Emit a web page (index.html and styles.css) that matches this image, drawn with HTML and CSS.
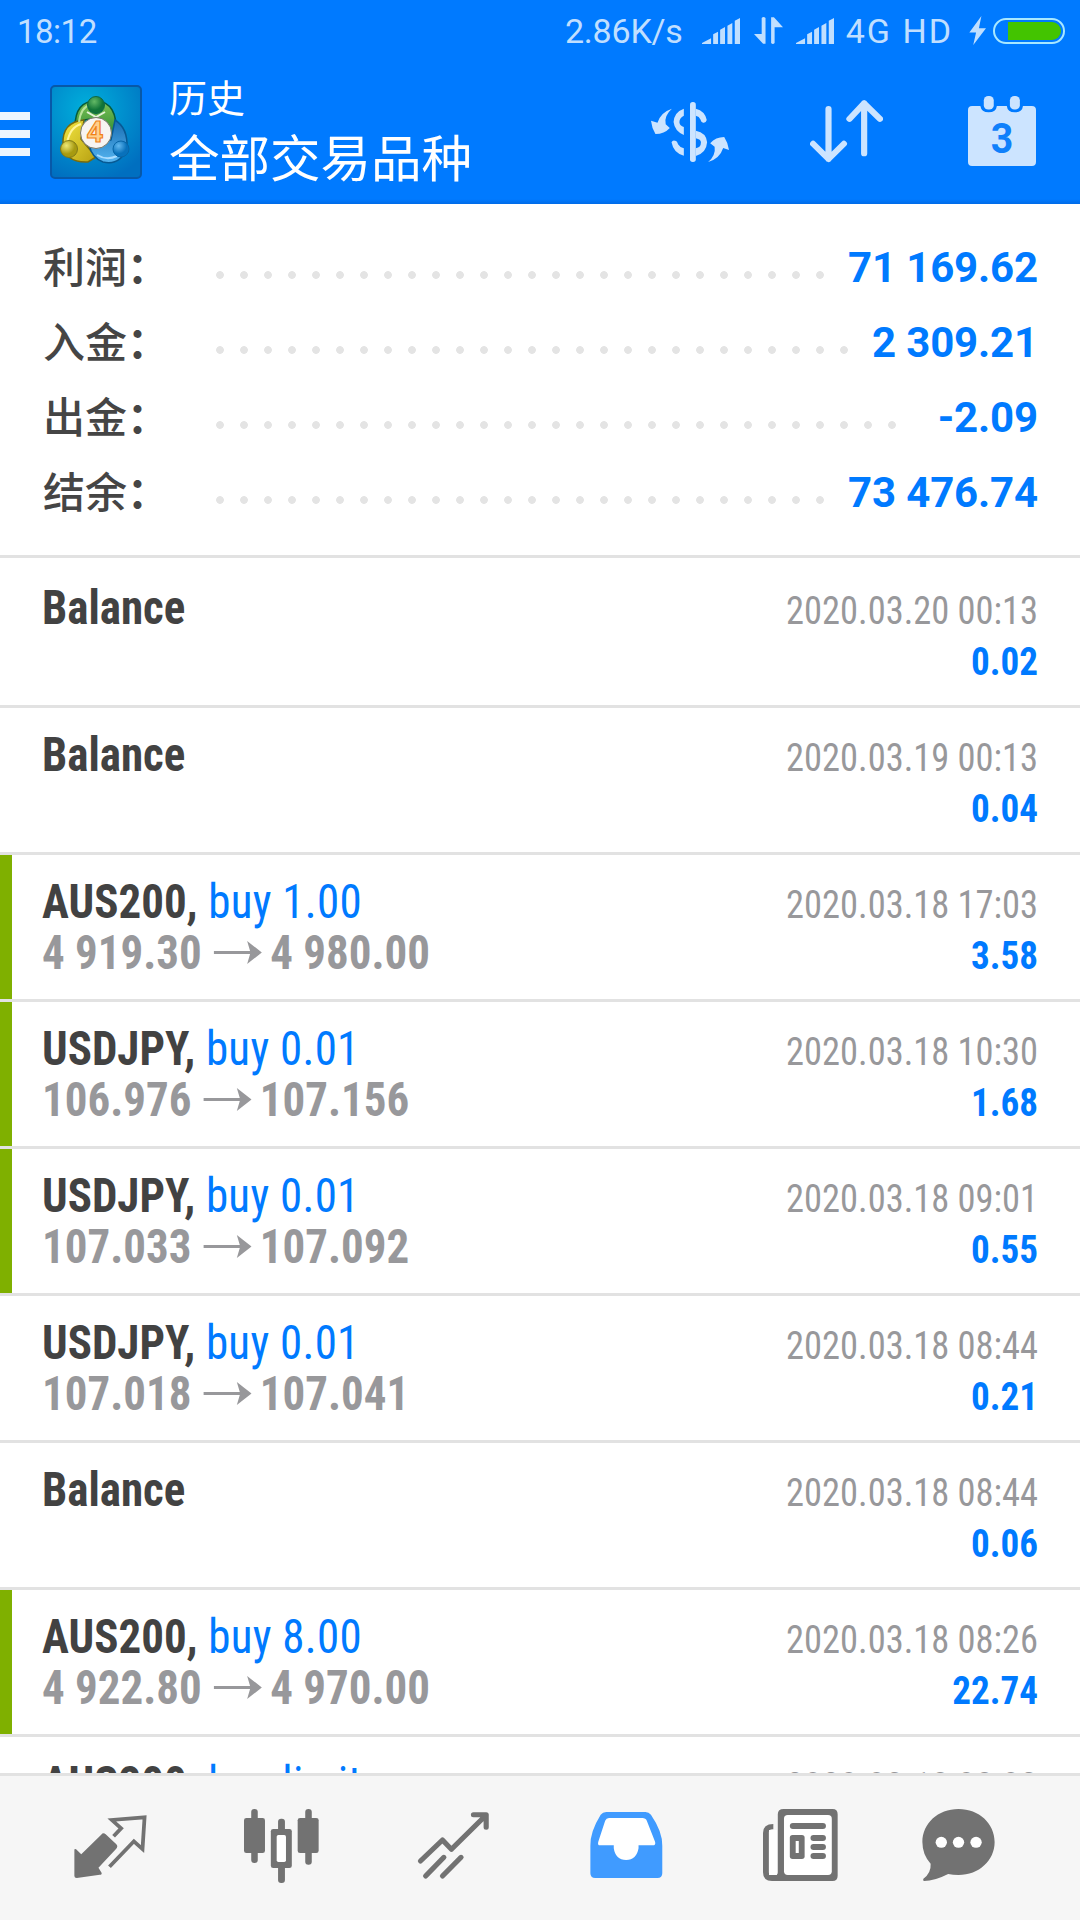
FILE: index.html
```html
<!DOCTYPE html>
<html lang="zh-CN">
<head>
<meta charset="utf-8">
<title>历史</title>
<link rel="stylesheet" href="styles.css">
</head>
<body>
<header class="header">
  <div class="status">
    <span class="clock">18:12</span>
    <div class="status-right">
      <span class="speed">2.86K/s</span>
      <svg class="signal" viewBox="0 0 109 77" preserveAspectRatio="none"><path d="M0 77V74L26 60V77ZM32 48 46 41V77H32ZM52 35 66 27V77H52ZM73 23 87 15V77H73ZM94 8 109 0V77H94Z"/></svg>
      <svg class="transfer" viewBox="0 0 83 80" preserveAspectRatio="none"><path d="M22 3Q27-3 33 3V79H26L0 50H22ZM49 77Q54 83 59 77V30H83L57 1H49Z"/></svg>
      <svg class="signal" viewBox="0 0 109 77" preserveAspectRatio="none"><path d="M0 77V74L26 60V77ZM32 48 46 41V77H32ZM52 35 66 27V77H52ZM73 23 87 15V77H73ZM94 8 109 0V77H94Z"/></svg>
      <span class="network">4G HD</span>
      <svg class="bolt" viewBox="0 0 48 86" preserveAspectRatio="none"><path d="M35 0 1 49H20L12 86 48 36H28Z"/></svg>
      <span class="battery"><span class="charge"></span></span>
    </div>
  </div>
  <div class="appbar">
    <span class="menu"><i></i><i></i><i></i></span>
    <svg class="logo" viewBox="0 0 92 94">
      <defs>
        <radialGradient id="sky" cx=".4" cy=".25" r=".8"><stop offset="0" stop-color="#00b0dc"/><stop offset="1" stop-color="#006fc0"/></radialGradient>
        <linearGradient id="green" x2="0" y2="1"><stop offset="0" stop-color="#7fc354"/><stop offset="1" stop-color="#137a2b"/></linearGradient>
        <linearGradient id="gold" x2="1" y2="1"><stop offset="0" stop-color="#f3e640"/><stop offset="1" stop-color="#b7a012"/></linearGradient>
        <linearGradient id="blue" x2="0" y2="1"><stop offset="0" stop-color="#176bb1"/><stop offset="1" stop-color="#55b5f1"/></linearGradient>
        <radialGradient id="greenball" cx=".4" cy=".3"><stop offset="0" stop-color="#63b965"/><stop offset="1" stop-color="#117437"/></radialGradient>
        <radialGradient id="goldball" cx=".35" cy=".3"><stop offset="0" stop-color="#eee875"/><stop offset="1" stop-color="#a79a10"/></radialGradient>
        <radialGradient id="blueball" cx=".35" cy=".3"><stop offset="0" stop-color="#63b8ef"/><stop offset="1" stop-color="#0871bb"/></radialGradient>
      </defs>
      <rect x="1" y="1" width="90" height="92" rx="4" fill="url(#sky)" stroke="#0758a8" stroke-width="2"/>
      <path d="M25 42Q25 16 46 16Q68 17 66 49L56 60L48 33L34 35Z" fill="url(#green)" stroke="#075c3c" stroke-width="1.5"/>
      <path d="M34 35Q12 37 13 59Q15 78 38 77L46 72L31 54Z" fill="url(#gold)" stroke="#796b0c" stroke-width="1.5"/>
      <path d="M65 35Q78 43 77 63Q70 81 53 77Q42 73 39 60L61 55Z" fill="url(#blue)" stroke="#075993" stroke-width="1.5"/>
      <path d="M17 58Q20 42 31 39" fill="none" stroke="#fff59a" stroke-width="2"/>
      <path d="M29 37Q31 22 40 20" fill="none" stroke="#b8e29a" stroke-width="2"/>
      <path d="M37 27 46 32 55 27" fill="none" stroke="#e4f2d8" stroke-width="2"/>
      <path d="M47 70Q57 76 67 71" fill="none" stroke="#a9dcff" stroke-width="2"/>
      <circle cx="46" cy="20" r="8.5" fill="url(#greenball)" stroke="#0d6847"/>
      <circle cx="19" cy="64" r="8.5" fill="url(#goldball)" stroke="#807a19"/>
      <circle cx="71" cy="64" r="8" fill="url(#blueball)" stroke="#0865a7"/>
      <circle cx="46" cy="48" r="15.5" fill="#f7f4f2" stroke="#77776a"/>
      <text class="logo-digit" x="45" y="57" text-anchor="middle">4</text>
    </svg>
    <div class="titles">
      <div class="title">历史</div>
      <div class="subtitle">全部交易品种</div>
    </div>
    <div class="actions">
      <svg class="act-dollar" viewBox="0 0 228 180" preserveAspectRatio="none">
        <path d="M61 20Q37 42 43 67L55 78Q39 96 13 96Q2 77 0 56L19 62Q28 31 61 20ZM167 180Q190 159 186 134L173 124Q189 105 214 105Q225 122 228 144L211 138Q201 170 167 180Z"/>
        <path d="M96 20V41Q83 47 83 61Q84 72 96 75V99Q69 87 66 60Q68 30 96 20ZM60 121Q63 114 70 116Q77 117 79 127Q84 136 96 139V161Q66 154 60 121Z"/>
        <path d="M131 20Q158 27 163 54Q160 64 152 62Q145 59 145 53Q141 43 131 41ZM131 86Q162 92 164 121Q162 153 131 162V139Q146 137 146 121Q146 112 131 109Z"/>
        <rect x="114" y="0" width="17" height="180" rx="8"/>
      </svg>
      <svg class="act-sort" viewBox="0 0 213 190" preserveAspectRatio="none"><path d="M54 27V178M9 132 54 178 99 132M158 161V10M115 57 158 10 204 57" fill="none" stroke="#cce4ff" stroke-width="18" stroke-linecap="round" stroke-linejoin="round"/></svg>
      <svg class="act-calendar" viewBox="0 0 198 211" preserveAspectRatio="none">
        <path d="M12 30H36Q39 49 60 49Q82 49 84 30H113Q115 49 136 49Q158 49 160 30H186Q198 30 198 42V199Q198 211 186 211H12Q0 211 0 199V42Q0 30 12 30Z"/>
        <rect x="46" y="0" width="29" height="41" rx="13"/><rect x="122" y="0" width="29" height="41" rx="13"/>
        <text class="cal-digit" transform="translate(99 173) scale(.88 1)" text-anchor="middle">3</text>
      </svg>
    </div>
  </div>
</header>

<section class="summary">
  <div class="sum-row"><span class="sum-label">利润<b>：</b></span><span class="dots" style="width:624px"></span><span class="sum-value">71 169.62</span></div>
  <div class="sum-row"><span class="sum-label">入金<b>：</b></span><span class="dots" style="width:648px"></span><span class="sum-value">2 309.21</span></div>
  <div class="sum-row"><span class="sum-label">出金<b>：</b></span><span class="dots" style="width:696px"></span><span class="sum-value">-2.09</span></div>
  <div class="sum-row"><span class="sum-label">结余<b>：</b></span><span class="dots" style="width:624px"></span><span class="sum-value">73 476.74</span></div>
</section>

<main class="deals">
  <article class="deal"><div class="info"><div class="name"><b>Balance</b></div></div><div class="result"><div class="date">2020.03.20 00:13</div><div class="profit">0.02</div></div></article>
  <article class="deal"><div class="info"><div class="name"><b>Balance</b></div></div><div class="result"><div class="date">2020.03.19 00:13</div><div class="profit">0.04</div></div></article>
  <article class="deal closed"><div class="info"><div class="name"><b>AUS200,</b> buy 1.00</div><div class="prices">4 919.30<svg class="arrow" viewBox="0 0 49 22"><path d="M0 9.5H37L34 0 49 11 34 22 37 12.500H0Z"/></svg>4 980.00</div></div><div class="result"><div class="date">2020.03.18 17:03</div><div class="profit">3.58</div></div></article>
  <article class="deal closed"><div class="info"><div class="name"><b>USDJPY,</b> buy 0.01</div><div class="prices">106.976<svg class="arrow" viewBox="0 0 49 22"><path d="M0 9.5H37L34 0 49 11 34 22 37 12.500H0Z"/></svg>107.156</div></div><div class="result"><div class="date">2020.03.18 10:30</div><div class="profit">1.68</div></div></article>
  <article class="deal closed"><div class="info"><div class="name"><b>USDJPY,</b> buy 0.01</div><div class="prices">107.033<svg class="arrow" viewBox="0 0 49 22"><path d="M0 9.5H37L34 0 49 11 34 22 37 12.500H0Z"/></svg>107.092</div></div><div class="result"><div class="date">2020.03.18 09:01</div><div class="profit">0.55</div></div></article>
  <article class="deal"><div class="info"><div class="name"><b>USDJPY,</b> buy 0.01</div><div class="prices">107.018<svg class="arrow" viewBox="0 0 49 22"><path d="M0 9.5H37L34 0 49 11 34 22 37 12.500H0Z"/></svg>107.041</div></div><div class="result"><div class="date">2020.03.18 08:44</div><div class="profit">0.21</div></div></article>
  <article class="deal"><div class="info"><div class="name"><b>Balance</b></div></div><div class="result"><div class="date">2020.03.18 08:44</div><div class="profit">0.06</div></div></article>
  <article class="deal closed"><div class="info"><div class="name"><b>AUS200,</b> buy 8.00</div><div class="prices">4 922.80<svg class="arrow" viewBox="0 0 49 22"><path d="M0 9.5H37L34 0 49 11 34 22 37 12.500H0Z"/></svg>4 970.00</div></div><div class="result"><div class="date">2020.03.18 08:26</div><div class="profit">22.74</div></div></article>
  <article class="deal"><div class="info"><div class="name"><b>AUS200,</b> buy limit</div></div><div class="result"><div class="date">2020.03.18 08:03</div></div></article>
</main>

<nav class="tabs">
  <svg class="tab" viewBox="0 0 218 222" preserveAspectRatio="none">
    <path d="M4 123Q4 118 9 121L24 136 82 77Q88 69 95 76L126 106Q132 113 125 120L74 176 83 191Q85 197 78 197L11 207Q4 207 4 201Z"/>
    <path d="M118 82 140 58 113 33 208 25 202 120 177 97 106 173" fill="none" stroke="#727272" stroke-width="11"/>
  </svg>
  <svg class="tab" viewBox="0 0 218 222" preserveAspectRatio="none">
    <rect x="21" y="0" width="19" height="162" rx="9"/><rect x="0" y="27" width="61" height="105" rx="7"/>
    <rect x="178" y="0" width="19" height="167" rx="9"/><rect x="156" y="27" width="61" height="105" rx="7"/>
    <rect x="99" y="29" width="20" height="193" rx="9"/><rect x="78" y="60" width="61" height="117" rx="7"/><rect x="95" y="78" width="27" height="81" rx="5" fill="#fff"/>
  </svg>
  <svg class="tab" viewBox="0 0 218 222" preserveAspectRatio="none"><path d="M13 156 77 93 103 121 204 18M167 17H204V55M28 201 81 145M77 201 131 145" fill="none" stroke="#727272" stroke-width="15" stroke-linecap="round" stroke-linejoin="round"/></svg>
  <svg class="tab active" viewBox="0 0 218 222" preserveAspectRatio="none">
    <path d="M50 9H164Q174 9 180 17Q214 68 213 110V193Q213 207 199 207H18Q4 207 4 193V110Q3 68 34 17Q40 9 50 9Z"/>
    <path d="M58 27H155Q165 27 168 35L192 98Q195 109 185 109H144V118Q138 153 108 153Q77 153 72 118V109H32Q24 109 27 98L47 35Q50 27 58 27Z" fill="#fff"/>
  </svg>
  <svg class="tab" viewBox="0 0 218 222" preserveAspectRatio="none">
    <path d="M60 0H202Q217 0 217 16V200Q217 216 202 216H26Q0 216 0 190V72Q0 45 30 45V61Q17 60 17 69V190Q17 198 24 198H36Q43 198 43 190V16Q43 0 60 0Z"/>
    <path d="M29 63V198" stroke="#fff" stroke-width="23"/>
    <rect x="61" y="18" width="139" height="180" rx="11" fill="#fff"/>
    <path d="M87 51H174M147 87H174M147 114H174M147 141H174" stroke="#727272" stroke-width="18" stroke-linecap="round"/>
    <rect x="78" y="78" width="43" height="72" rx="8"/><rect x="95" y="96" width="9" height="36" fill="#fff"/>
  </svg>
  <svg class="tab" viewBox="0 0 218 222" preserveAspectRatio="none">
    <path d="M109 0C169 0 214 44 214 99S169 198 109 198Q93 198 79 195Q39 216 9 216Q4 215 7 209Q30 191 28 164Q4 137 4 99C4 44 49 0 109 0Z"/>
    <circle cx="59" cy="100" r="16.500" fill="#fff"/><circle cx="109" cy="100" r="16.500" fill="#fff"/><circle cx="160" cy="100" r="16.500" fill="#fff"/>
  </svg>
</nav>
</body>
</html>
```
FILE: styles.css
```css
* { box-sizing: border-box; }
body {
  margin: 0;
  width: 1080px;
  height: 1920px;
  overflow: hidden;
  display: flex;
  flex-direction: column;
  background: #fff;
  font-family: Roboto, "Noto Sans CJK SC", sans-serif;
}
svg { display: block; flex: none; }

/* Header */
.header {
  flex: none;
  height: 204px;
  background: linear-gradient(#007aff 199px, #006be8 204px);
  color: #fff;
}
.status {
  height: 62px;
  padding: 0 15px 0 17px;
  display: flex;
  justify-content: space-between;
  color: #c0dfff;
  fill: #c0dfff;
  font-size: 34px;
  line-height: 64px;
}
.clock { font-size: 33px; letter-spacing: -.5px; }
.status-right { display: flex; align-items: center; height: 61px; }
.speed { margin-right: 19px; letter-spacing: -.2px; }
.signal { width: 38px; height: 26px; }
.transfer { width: 29px; height: 27px; margin: 0 13px 0 14px; }
.network { margin: 0 16px 0 12px; letter-spacing: 2px; }
.bolt { width: 17px; height: 29px; margin-right: 7px; }
.battery {
  width: 72px;
  height: 26px;
  border: 2px solid #a8e8ff;
  border-radius: 13px;
  padding: 2px 2px 2px 13px;
}
.charge { display: block; height: 18px; border-radius: 0 9px 9px 0; background: #43c400; }

.appbar { height: 142px; display: flex; align-items: center; padding-bottom: 3px; }
.menu { width: 30px; display: flex; flex-direction: column; gap: 10px; margin-top: 5px; }
.menu i { height: 8px; background: #edf6ff; }
.logo { width: 92px; height: 94px; margin-left: 20px; }
.logo-digit { font: 700 28px "Open Sans", sans-serif; fill: #ffd08a; stroke: #f08018; stroke-width: 1.2px; }
.titles { margin-left: 27px; margin-top: 7px; white-space: nowrap; }
.title { font-size: 38px; line-height: 50px; }
.subtitle { font-size: 50.5px; line-height: 72px; }
.actions { flex: 1; display: flex; align-items: center; justify-content: flex-end; padding-right: 44px; fill: #cce4ff; }
.act-dollar { width: 78px; height: 60px; margin-right: 81px; }
.act-sort { width: 73px; height: 63px; margin-right: 85px; }
.act-calendar { width: 68px; height: 70px; margin-bottom: 2px; }
.cal-digit { font: 700 130px Roboto, sans-serif; fill: #0f80fb; }

/* Totals */
.summary { flex: none; height: 354px; padding: 26px 42px 0 43px; border-bottom: 3px solid #e2e2e2; }
.sum-row { height: 75px; display: flex; align-items: center; }
.sum-label { width: 165px; margin-top: -6px; font-size: 42px; font-weight: 500; color: #454545; white-space: nowrap; }
.dots {
  height: 8px;
  margin-top: 14px;
  background: radial-gradient(circle, #e4e4e4 3.5px, transparent 4.2px) 0 0 / 24px 8px;
}
.sum-value { flex: 1; text-align: right; white-space: nowrap; font-size: 42px; font-weight: 700; letter-spacing: -.15px; color: #007aff; }

/* Deals */
.deals { flex: 1; min-height: 0; overflow: hidden; padding-top: 3px; }
.deal {
  height: 147px;
  padding: 19px 42px 0;
  border-bottom: 3px solid #e2e2e2;
  display: flex;
  justify-content: space-between;
  font-family: "Roboto Condensed", Roboto, sans-serif;
  font-stretch: 75%;
}
.closed { background: linear-gradient(#7fb000, #7fb000) 0 0 / 12px 100% no-repeat; }
.info { transform: scaleX(.937); transform-origin: 0 0; }
.name, .prices { white-space: nowrap; font-size: 48px; line-height: 51px; }
.name { margin-top: 2px; color: #007aff; letter-spacing: .3px; }
.name b { color: #424242; letter-spacing: 0; }
.prices { display: flex; align-items: center; font-weight: 700; color: #98989b; fill: #98989b; }
.arrow { width: 52px; height: 23px; margin: 0 9px 0 12px; }
.result { text-align: right; white-space: nowrap; font-size: 39.5px; line-height: 51px; }
.date { margin-top: 5px; color: #98989b; transform: scaleX(.923); transform-origin: 100% 0; }
.profit { font-weight: 700; color: #007aff; transform: scaleX(.94); transform-origin: 100% 0; }

/* Tabs */
.tabs {
  flex: none;
  height: 147px;
  border-top: 3px solid #e2e2e2;
  background: #f6f6f6;
  padding: 33px 24px 0;
  display: grid;
  grid-template-columns: 172px 171px 173px 173px 175px 140px;
  justify-items: center;
  align-items: start;
  fill: #727272;
}
.tab { width: 75px; height: 74px; }
.active { fill: #409bff; }
```
